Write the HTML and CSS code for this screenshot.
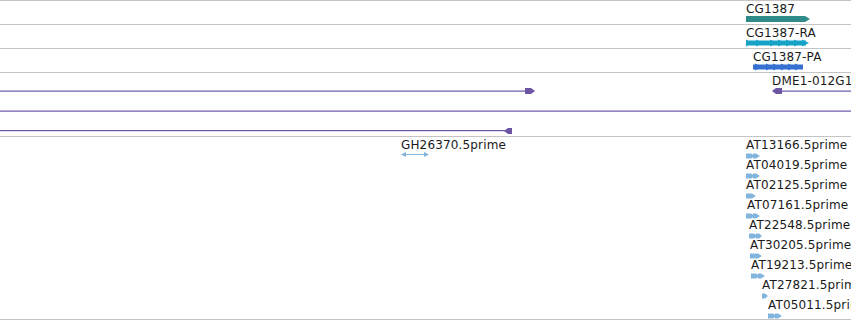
FILE: index.html
```html
<!DOCTYPE html>
<html lang="en">
<head>
    <meta charset="UTF-8">
    <title>Track view</title>
    <link rel="stylesheet" href="styles.css">
</head>
<body>
    <div class="tracks">
        <!-- gene -->
        <div class="track track-small">
            <svg class="glyphs" width="851" height="23">
                <polygon class="gene" points="746,15 805,15 810,18 805,21 746,21"/>
            </svg>
            <span class="lbl" style="left:746px">CG1387</span>
        </div>

        <!-- transcript -->
        <div class="track track-small">
            <svg class="glyphs" width="851" height="23">
                <g class="mrna">
                    <rect x="746" y="15.5" width="60" height="5"/>
                    <polygon points="746,14.5 752,18 746,21.5"/>
                    <polygon points="756,14.5 763,18 756,21.5"/>
                    <polygon points="770,14.5 777,18 770,21.5"/>
                    <polygon points="778,14.5 785,18 778,21.5"/>
                    <polygon points="786,14.5 793,18 786,21.5"/>
                    <polygon points="794,14.5 801,18 794,21.5"/>
                    <polygon points="802,14.5 809,18 802,21.5"/>
                </g>
            </svg>
            <span class="lbl" style="left:746px">CG1387-RA</span>
        </div>

        <!-- protein -->
        <div class="track track-small">
            <svg class="glyphs" width="851" height="23">
                <g class="cds">
                    <rect x="753" y="15.5" width="50" height="5"/>
                    <polygon points="755,14.5 762,18 755,21.5"/>
                    <polygon points="766,14.5 773,18 766,21.5"/>
                    <polygon points="773,14.5 780,18 773,21.5"/>
                    <polygon points="781,14.5 788,18 781,21.5"/>
                    <polygon points="788,14.5 795,18 788,21.5"/>
                    <polygon points="795,14.5 802,18 795,21.5"/>
                </g>
            </svg>
            <span class="lbl" style="left:753px">CG1387-PA</span>
        </div>

        <!-- alignments -->
        <div class="track track-mid">
            <svg class="glyphs" width="851" height="63">
                <g class="align">
                    <rect x="0" y="17.5" width="526" height="1.2"/>
                    <polygon points="525,15 531,15 535,18 531,21 525,21"/>
                    <polygon points="772,18 776,15 782,15 782,21 776,21"/>
                    <rect x="782" y="17.5" width="69" height="1.2"/>
                    <rect x="0" y="37.5" width="851" height="1.2"/>
                    <rect x="0" y="57" width="506" height="1.2"/>
                    <polygon points="504,58 508,55 512,55 512,61 508,61"/>
                </g>
            </svg>
            <span class="lbl" style="left:772px">DME1-012G10</span>
        </div>

        <!-- ESTs -->
        <div class="track track-big">
            <svg class="glyphs" width="851" height="182">
                <g class="est">
                    <rect x="403" y="17" width="24" height="1"/>
                    <polygon points="401,17.5 406,15 406,20"/>
                    <polygon points="429,17.5 424,15 424,20"/>

                    <polygon points="746,16.5 751,16.5 755,19 751,21.5 746,21.5"/>
                    <polygon points="753,16.5 756,16.5 760,19 756,21.5 753,21.5"/>

                    <polygon points="746,36.5 751,36.5 755,39 751,41.5 746,41.5"/>
                    <polygon points="753,36.5 756,36.5 760,39 756,41.5 753,41.5"/>

                    <polygon points="746,56.5 752,56.5 756,59 752,61.5 746,61.5"/>

                    <polygon points="746,76.5 751,76.5 755,79 751,81.5 746,81.5"/>
                    <polygon points="753,76.5 756,76.5 760,79 756,81.5 753,81.5"/>

                    <polygon points="749,96.5 754,96.5 758,99 754,101.5 749,101.5"/>
                    <polygon points="756,96.5 759,96.5 762,99 759,101.5 756,101.5"/>

                    <polygon points="750,116.5 754,116.5 757,119 754,121.5 750,121.5"/>
                    <polygon points="755,116.5 758,116.5 762,119 758,121.5 755,121.5"/>

                    <polygon points="751,136.5 756,136.5 760,139 756,141.5 751,141.5"/>
                    <polygon points="758,136.5 761,136.5 765,139 761,141.5 758,141.5"/>

                    <polygon points="762,156.5 765,156.5 768,159 765,161.5 762,161.5"/>

                    <polygon points="768,176.5 773,176.5 777,179 773,181.5 768,181.5"/>
                    <polygon points="775,176.5 778,176.5 782,179 778,181.5 775,181.5"/>
                </g>
            </svg>
            <span class="lbl" style="left:401px">GH26370.5prime</span>
            <span class="lbl" style="left:746px; top:1px">AT13166.5prime</span>
            <span class="lbl" style="left:746px; top:21px">AT04019.5prime</span>
            <span class="lbl" style="left:746px; top:41px">AT02125.5prime</span>
            <span class="lbl" style="left:747px; top:61px">AT07161.5prime</span>
            <span class="lbl" style="left:749px; top:81px">AT22548.5prime</span>
            <span class="lbl" style="left:750px; top:101px">AT30205.5prime</span>
            <span class="lbl" style="left:751px; top:121px">AT19213.5prime</span>
            <span class="lbl" style="left:762px; top:141px">AT27821.5prime</span>
            <span class="lbl" style="left:768px; top:161px">AT05011.5prime</span>
        </div>
    </div>
</body>
</html>
```

FILE: styles.css
```css
:root {
    --rule-color: #c4c4c4;
    --text-color: #1a1a1a;
    --gene-color: #2e8b8a;
    --mrna-color: #18a3c6;
    --cds-color: #3670d2;
    --align-color: #6c56a4;
    --est-color: #82b5de;
}

* {
    margin: 0;
    padding: 0;
    box-sizing: border-box;
}

body {
    width: 851px;
    height: 320px;
    overflow: hidden;
    background: white;
    font-family: 'DejaVu Sans', sans-serif;
    color: var(--text-color);
}

.tracks {
    border-top: 1px solid var(--rule-color);
}

.track {
    position: relative;
    overflow: hidden;
    border-bottom: 1px solid var(--rule-color);
}

.track-small {
    height: 24px;
}

.track-mid {
    height: 64px;
}

.track-big {
    height: 183px;
}

.glyphs {
    position: absolute;
    left: 0;
    top: 0;
    display: block;
}

.lbl {
    position: absolute;
    top: 1px;
    font-size: 12px;
    line-height: 14px;
    letter-spacing: 0.15px;
    white-space: nowrap;
}

.gene { fill: var(--gene-color); }
.mrna { fill: var(--mrna-color); }
.cds { fill: var(--cds-color); }
.align { fill: var(--align-color); }
.est { fill: var(--est-color); }
```
